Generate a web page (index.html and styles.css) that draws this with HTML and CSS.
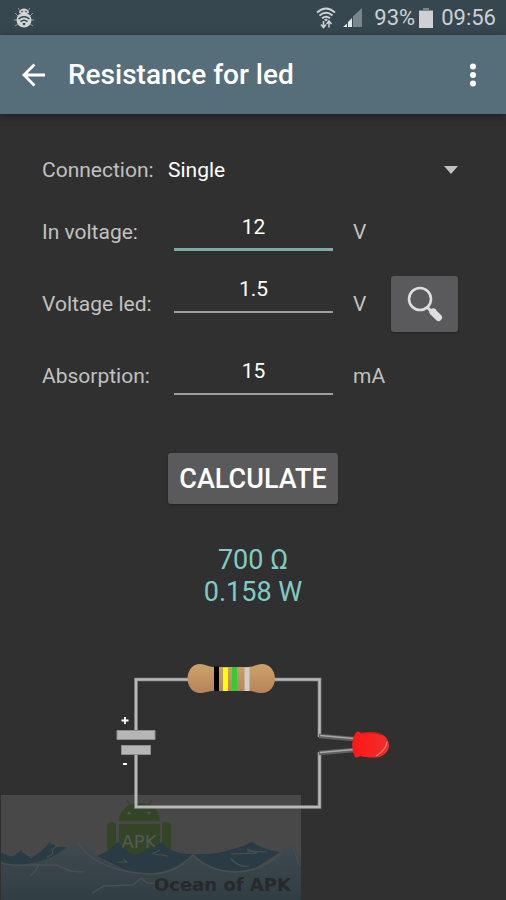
FILE: index.html
```
<!DOCTYPE html>
<html lang="en">
<head>
<meta charset="utf-8">
<meta name="viewport" content="width=device-width, initial-scale=1">
<title>Resistance for led</title>
<link rel="stylesheet" href="styles.css">
</head>
<body>
<div class="status">
  <svg class="status-bug" width="20" height="22" viewBox="0 0 20 22" aria-hidden="true">
    <g fill="none" stroke="#8f9a9f" stroke-width="1"><path d="M6 4 4 1M14 4l2-3M4 9 1 6M16 9l3-3M3 13H0M17 13h3M4 17l-3 2M16 17l3 2"/></g>
    <path d="M5 6a5 4.500 0 0 1 10 0z" fill="#c8cdd0"/>
    <ellipse cx="10" cy="13" rx="7.500" ry="7.500" fill="#d0d5d7"/>
    <g fill="#37474f"><circle cx="8" cy="4.500" r=".8"/><circle cx="12" cy="4.500" r=".8"/><circle cx="10" cy="17" r="1.300"/></g>
    <path d="M4.500 12q5.500-4.500 11 0M6.500 14.700q3.500-2.700 7 0" fill="none" stroke="#37474f" stroke-width="1.500"/>
  </svg>
  <div class="status-right">
    <svg width="20" height="22" viewBox="0 0 20 22" aria-hidden="true">
      <g fill="none" stroke="#cdd1d3" stroke-width="1.900"><path d="M1 5.500Q10-2.500 19 5.500M3.500 8.500q6.500-5.500 13 0M6 11.300q4-3.200 8 0"/></g>
      <path d="M8 12.500q2-1.500 4 0l-2 2z" fill="#cdd1d3"/>
      <g fill="none" stroke="#cdd1d3" stroke-width="1.500"><path d="M7.500 14v6M5 17.500l2.500 3 2.500-3M13 20.500v-6M10.500 17l2.500-3 2.500 3"/></g>
    </svg>
    <svg width="20" height="20" viewBox="0 0 20 20" aria-hidden="true">
      <path d="M11 8.500 20 0v19h-9z" fill="#7b858a"/><path d="M1 19 5 15.500V19zM6 14l4-4v9H6z" fill="#e4e7e8"/>
    </svg>
    <span class="percent">93%</span>
    <svg width="14" height="20" viewBox="0 0 14 20" aria-hidden="true"><path d="M4 0h6v2h4v2H0V2h4z" fill="#7b858a"/><path d="M0 3h14v17H0z" fill="#cdd1d3"/></svg>
    <span class="time">09:56</span>
  </div>
</div>
<header class="appbar">
  <button class="icon-btn back" type="button" aria-label="Back">
    <svg width="24" height="24" viewBox="0 0 24 24"><path d="M23 12H2.500M12.500 1.500 2 12l10.500 10.500" fill="none" stroke="#fff" stroke-width="2.800"/></svg>
  </button>
  <h1>Resistance for led</h1>
  <button class="icon-btn more" type="button" aria-label="More options">
    <svg width="8" height="24" viewBox="0 0 8 24" fill="#fff"><circle cx="4" cy="3.500" r="3"/><circle cx="4" cy="12" r="3"/><circle cx="4" cy="20.500" r="3"/></svg>
  </button>
</header>
<main>
  <form class="form">
    <div class="row connection">
      <label for="connection">Connection:</label>
      <div class="select-box">
        <select id="connection"><option>Single</option></select>
        <svg width="14" height="8" viewBox="0 0 14 8" aria-hidden="true"><path d="M0 0h14L7 8z" fill="#c1c1c1"/></svg>
      </div>
    </div>
    <div class="row">
      <label for="vin">In voltage:</label>
      <input id="vin" class="active" type="text" inputmode="decimal" value="12">
      <span class="unit">V</span>
    </div>
    <div class="row tall">
      <label for="vled">Voltage led:</label>
      <input id="vled" type="text" inputmode="decimal" value="1.5">
      <span class="unit">V</span>
      <button class="search" type="button" aria-label="Search led voltage">
        <svg width="36" height="36" viewBox="0 0 36 36">
          <circle cx="13" cy="13" r="11" fill="none" stroke="#dedede" stroke-width="2.600"/>
          <path d="m20.500 21.500 4 4" stroke="#dedede" stroke-width="3"/>
          <path d="m26 26 5.500 5.500" stroke="#dedede" stroke-width="7" stroke-linecap="round"/>
          <path d="m22.500 26.500 4-4 3 1-5.500 5.500z" fill="#dedede"/>
        </svg>
      </button>
    </div>
    <div class="row">
      <label for="abs">Absorption:</label>
      <input id="abs" type="text" inputmode="decimal" value="15">
      <span class="unit">mA</span>
    </div>
    <button class="calculate" type="button">CALCULATE</button>
  </form>
  <output class="result" for="vin vled abs">700 Ω<br>0.158 W</output>
  <svg class="circuit" width="276" height="150" viewBox="115 661 276 150" role="img" aria-label="Circuit with battery, resistor and led">
    <defs>
      <linearGradient id="body" x1="0" y1="0" x2="0" y2="1"><stop offset="0" stop-color="#cda369"/><stop offset="1" stop-color="#b7835a"/></linearGradient>
      <linearGradient id="led" x1="0" y1="0" x2="1" y2="0"><stop offset="0" stop-color="#ff1717"/><stop offset="1" stop-color="#ee302d"/></linearGradient>
    </defs>
    <g fill="none" stroke-linejoin="miter">
      <path d="M136 731v-51.500h183.500V737M136 754v53h183.500V752" stroke="#8e8e8e" stroke-width="3.600"/>
      <path d="M136 731v-51.500h183.500V737M136 754v53h183.500V752" stroke="#b8b8b8" stroke-width="2"/>
      <path d="m319 736 35 3M319 753l35-3" stroke="#606060" stroke-width="4.500"/>
      <path d="m320 735.500 34 3M320 752.500l34-3" stroke="#a6a6a6" stroke-width="1.600"/>
    </g>
    <g fill="#b6b6b6" stroke="#8e8e8e" stroke-width="1"><path d="M117 730.500h38v9h-38zM121.500 745.500h29v9h-29z"/></g>
    <path d="M121.500 720.500h7M125 717v7M123 764h4" stroke="#fff" stroke-width="1.800"/>
    <path d="M200 664c5 0 8 3 14 3h34c6 0 9-3 14-3 7 0 13 6 13 14.500S269 693 262 693c-5 0-8-2-14-2h-34c-6 0-9 2-14 2-7 0-12.500-6-12.500-14.500S193 664 200 664z" fill="url(#body)"/>
    <path d="M214 666.500h5V691h-5z" fill="#000"/><path d="M223 667.500h5V691h-5z" fill="#ff0"/><path d="M232 667h5v24h-5z" fill="#33cc33"/><path d="M244.500 667.500h5V691h-5z" fill="#cfcfcf"/>
    <path d="M357 731.500q2-.5 4 1.500c6-1 10-1 15-.5 7 1 13 6 13 13 0 6-6 12-14 12-6 0-10-.5-15-1.500-2 2-4 1.500-5 .5-4-7-4-19 2-25z" fill="url(#led)"/>
    <path d="M387 742q-1 8-11 14" fill="none" stroke="#ff7a73" stroke-width="1.300"/>
    <path d="M362 733q14-1 20 2" fill="none" stroke="#c91414" stroke-width="1"/>
  </svg>
  <svg class="watermark" width="300" height="105" viewBox="0 0 300 105" role="img" aria-label="Ocean of APK">
    <defs><linearGradient id="sea" x1="0" y1="0" x2="0" y2="1"><stop offset="0" stop-color="#414a50"/><stop offset="1" stop-color="#303e44"/></linearGradient></defs>
    <path d="M0 0h300v105H0z" fill="#484848"/>
    <g fill="#344426">
      <path d="M118 26C119 2 158 2 159 26zM118 29h41v38h-41z"/>
      <rect x="106" y="27" width="9" height="30" rx="4.500"/><rect x="161" y="27" width="9" height="30" rx="4.500"/>
      <path d="m126 5 4 6M151 5l-4 6" stroke="#344426" stroke-width="1.200"/>
    </g>
    <g fill="#505550"><circle cx="128" cy="18" r="1.600"/><circle cx="148" cy="18" r="1.600"/></g>
    <text class="apk" x="138" y="53" text-anchor="middle">APK</text>
    <path d="M0 57q7 5 12 4l9-6q5 6 11 7 11-7 17-15 8 6 18 5L50 80H0zM96 61q13-5 21-14 6 9 16 13 7-1 12-5 10-3 16-8 5 7 12 9 9 4 29 3 16 0 30-5 10-2 19-7 11 8 28 10l-40 26H140z" fill="#2a3b45"/>
    <path d="M0 68q12 4 24 1 25-2 44-19 6-5 11-3 8 4 17 14 22 16 51 17 25 0 45-19 17 17 44 17 25-1 43-18 8-11 12-7l9 12v42H0z" fill="url(#sea)"/>
    <g fill="none" stroke="#4a4e50" stroke-width="1.500">
      <path d="M0 68q12 3 24 2h31l14 6 14 1M37 71q-3 7-8 10M91 98l12-7 29-1 8-7 6 5h10M76 47l10 12q25 19 63 20 25 0 43-19 17 17 44 17 25-1 43-18"/>
      <path d="m49 48 8 2-6 5 1 4-6 3M54 50l5 2M21 56l10 7M116 67h10l-4-3M151 59l8-4M153 59l14 2M230 59l26-1-10-4M229 63q9 10 19 8M292 53l7 18M246 56l20 1" stroke-width="1.200"/>
    </g>
    <text class="brand" x="153" y="96">Ocean of APK</text>
  </svg>
</main>
</body>
</html>
```

FILE: styles.css
```
* { box-sizing: border-box; }
body {
  margin: 0;
  min-height: 100vh;
  display: flex;
  flex-direction: column;
  background: #303030;
  color: #fff;
  font-family: Roboto, "Noto Sans", sans-serif;
  font-size: 21px;
}
button, input, select { font: inherit; color: inherit; }
button { border: 0; padding: 0; cursor: pointer; }
svg { display: block; flex: none; }

.status {
  height: 35px;
  padding: 0 10px 0 14px;
  display: flex;
  align-items: center;
  justify-content: space-between;
  background: #37474f;
  color: #cdd1d3;
  font-size: 22px;
}
.status-right { display: flex; align-items: center; gap: 4px; }
.status-right svg + svg { margin-left: 2px; }
.percent { margin-left: 8px; }
.time { margin-left: 4px; }

.appbar {
  height: 79px;
  padding: 0 24px 0 22px;
  display: flex;
  align-items: center;
  background: #566e7a;
  box-shadow: 0 2px 8px rgba(0, 0, 0, .4);
}
.icon-btn { background: none; }
h1 { flex: 1; margin: 0 0 0 22px; font-size: 28px; font-weight: 500; line-height: 32px; }
.more { padding: 0 5px; }

main {
  flex: 1;
  position: relative;
  padding-top: 29px;
  display: flex;
  flex-direction: column;
}
.form {
  padding: 0 48px 0 42px;
  display: flex;
  flex-direction: column;
  gap: 8px;
}
.row {
  min-height: 54px;
  display: grid;
  grid-template-columns: 132px minmax(0, 1fr) 58px 67px;
  align-items: center;
}
.row.connection { grid-template-columns: 126px minmax(0, 1fr); }
.row.tall { min-height: 74px; }
label, .unit { color: #c1c1c1; }
.unit { margin-left: 20px; white-space: nowrap; }
.row input {
  align-self: start;
  width: 100%;
  height: 46px;
  padding: 0;
  border: 0;
  border-bottom: 2px solid #9b9f9e;
  border-radius: 0;
  background: none;
  text-align: center;
  outline: 0;
}
.row input.active { border-bottom: 3px solid #80aaa4; }
.select-box { display: grid; align-items: center; }
.select-box select, .select-box svg { grid-area: 1 / 1; }
.select-box select {
  width: 100%;
  height: 48px;
  padding: 0;
  appearance: none;
  border: 0;
  background: transparent;
}
.select-box option { background: #424242; }
.select-box svg { justify-self: end; pointer-events: none; }
.search, .calculate {
  background: #5a5a5c;
  border-radius: 3px;
  box-shadow: 0 1px 2px rgba(0, 0, 0, .3);
}
.search { height: 56px; display: grid; place-items: center; }
.calculate {
  align-self: center;
  height: 51px;
  margin: 42px 0 0 6px;
  padding: 0 11px;
  font-size: 27px;
  font-weight: 500;
}

.result {
  margin-top: 40px;
  color: #80cbc4;
  font-size: 27px;
  line-height: 32px;
  text-align: center;
}
.circuit { position: relative; z-index: 1; align-self: center; margin: 53px 0 32px; }
.watermark { position: absolute; left: 1px; bottom: 0; }
.apk { font: 18px "DejaVu Sans", sans-serif; fill: #555a54; }
.brand { font: bold 18px "DejaVu Sans", sans-serif; fill: #27292a; }
```
